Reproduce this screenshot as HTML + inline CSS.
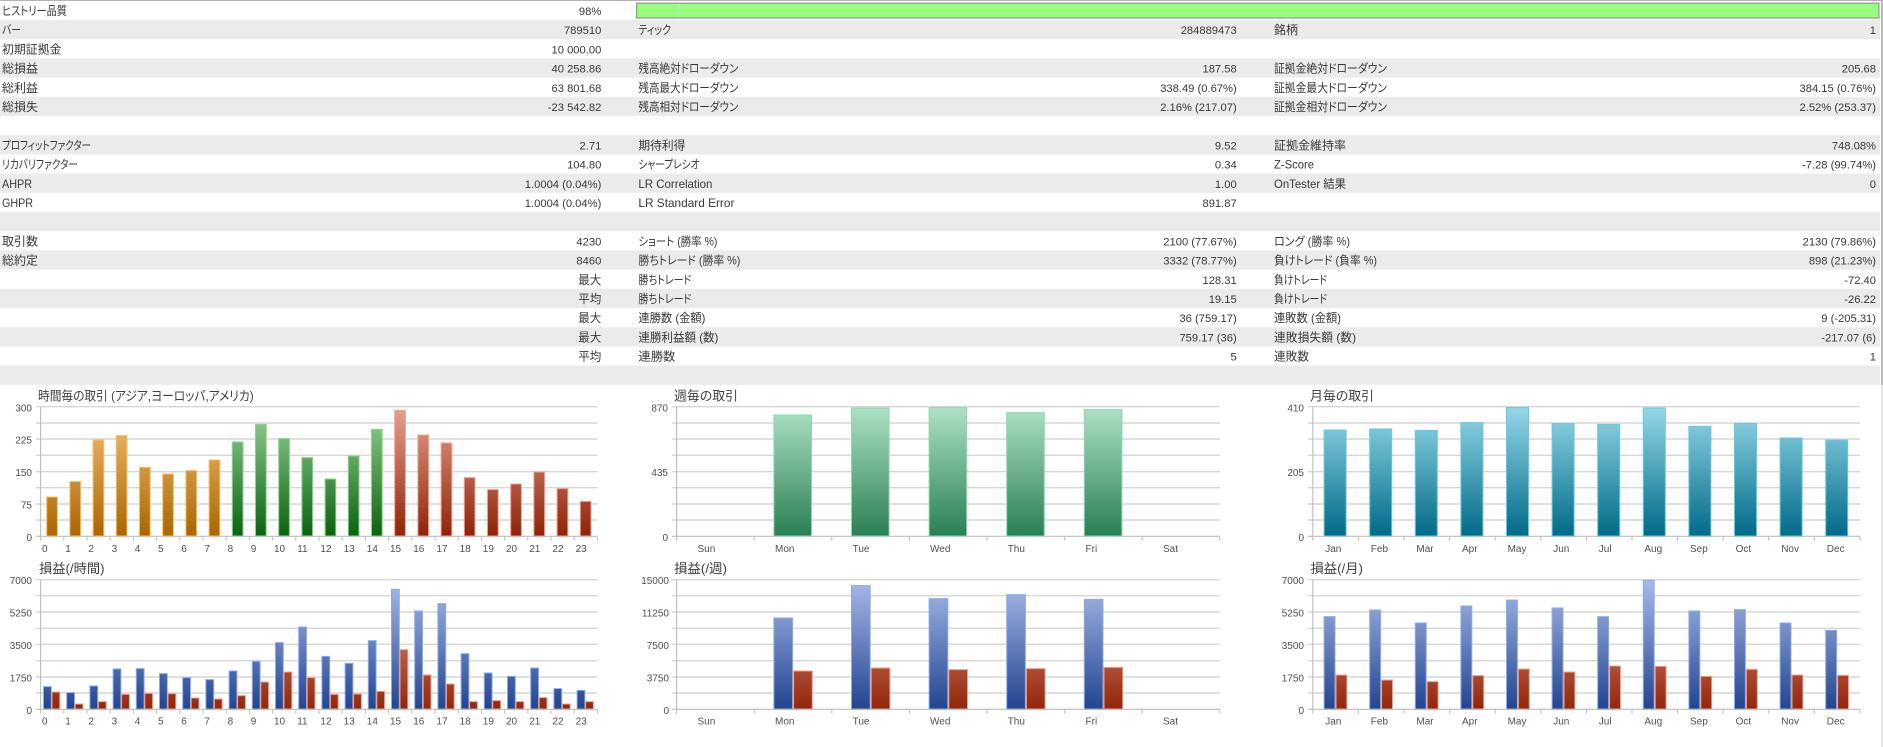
<!DOCTYPE html>
<html lang="ja">
<head>
<meta charset="utf-8">
<title>Report</title>
<style>
html,body{margin:0;padding:0;background:#fff;width:1883px;height:747px;overflow:hidden}
svg{display:block;filter:blur(.38px)}
text{font-family:"Liberation Sans","Noto Sans CJK JP",sans-serif;fill:#383838;font-size:11.2px;font-feature-settings:"palt"}
text[textLength]{font-size:12px}
text:not(.a):not(.t){transform:translateY(.6px)}
.r{text-anchor:end}
.a{font-size:10px;fill:#505050}
.t[textLength]{font-size:13px;fill:#404040}
.b path{vector-effect:non-scaling-stroke;stroke-width:1}
.g{fill:none;stroke:#d6d6d6;stroke-width:1.4}
.x{fill:none;stroke:#bdbdbd;stroke-width:1.1}
</style>
</head>
<body>
<svg width="1883" height="747" viewBox="0 0 1883 747" xmlns="http://www.w3.org/2000/svg">
<defs>
<linearGradient id="o" gradientUnits="userSpaceOnUse" x1="0" x2="0" y1="20" y2="409"><stop offset="0" stop-color="#f6c47c"/><stop offset="1" stop-color="#a86600"/></linearGradient>
<linearGradient id="gr" gradientUnits="userSpaceOnUse" x1="0" x2="0" y1="20" y2="409"><stop offset="0" stop-color="#98d498"/><stop offset="1" stop-color="#0a620e"/></linearGradient>
<linearGradient id="rd" gradientUnits="userSpaceOnUse" x1="0" x2="0" y1="20" y2="409"><stop offset="0" stop-color="#e8a390"/><stop offset="1" stop-color="#8e2208"/></linearGradient>
<linearGradient id="sg" gradientUnits="userSpaceOnUse" x1="0" x2="0" y1="20" y2="409"><stop offset="0" stop-color="#aee2c6"/><stop offset="1" stop-color="#2a7f53"/></linearGradient>
<linearGradient id="tl" gradientUnits="userSpaceOnUse" x1="0" x2="0" y1="20" y2="409"><stop offset="0" stop-color="#96d8e8"/><stop offset="1" stop-color="#006a88"/></linearGradient>
<linearGradient id="bl" gradientUnits="userSpaceOnUse" x1="0" x2="0" y1="539" y2="928"><stop offset="0" stop-color="#a8bbe8"/><stop offset="1" stop-color="#224590"/></linearGradient>
<linearGradient id="r2" gradientUnits="userSpaceOnUse" x1="0" x2="0" y1="539" y2="928"><stop offset="0" stop-color="#e8a390"/><stop offset="1" stop-color="#92260a"/></linearGradient>
</defs>

<!-- top line + scrollbar -->
<rect x="0" y="0" width="1883" height="1" fill="#b4b4b4"/>
<rect x="1881" y="0" width="2" height="385" fill="#b8b8b8"/>
<rect x="1881" y="385" width="2" height="362" fill="#e8e8e8"/>

<!-- rows -->
<g fill="#ebebeb">
<rect x="0" y="20" width="1880" height="19.2"/>
<rect x="0" y="58.4" width="1880" height="19.2"/>
<rect x="0" y="96.8" width="1880" height="19.2"/>
<rect x="0" y="135.2" width="1880" height="19.2"/>
<rect x="0" y="173.6" width="1880" height="19.2"/>
<rect x="0" y="212" width="1880" height="19.2"/>
<rect x="0" y="250.4" width="1880" height="19.2"/>
<rect x="0" y="288.8" width="1880" height="19.2"/>
<rect x="0" y="327.2" width="1880" height="19.2"/>
<rect x="0" y="365.6" width="1880" height="19.2"/>
</g>

<!-- progress bar -->
<rect x="636.6" y="3.2" width="1242.3" height="14.8" fill="#96ff7e" stroke="#9a9a9a" stroke-width="1.3"/>
<rect x="678.4" y="3.8" width="1" height="13.6" fill="#c4e8b8"/>

<!-- col 1 -->
<text x="2" y="14.4" textLength="65" lengthAdjust="spacingAndGlyphs">ヒストリー品質</text>
<text x="2" y="33.6" textLength="19" lengthAdjust="spacingAndGlyphs">バー</text>
<text x="2" y="52.8" textLength="59.5" lengthAdjust="spacingAndGlyphs">初期証拠金</text>
<text x="2" y="72" textLength="36" lengthAdjust="spacingAndGlyphs">総損益</text>
<text x="2" y="91.2" textLength="36" lengthAdjust="spacingAndGlyphs">総利益</text>
<text x="2" y="110.4" textLength="36" lengthAdjust="spacingAndGlyphs">総損失</text>
<text x="2" y="148.8" textLength="89" lengthAdjust="spacingAndGlyphs">プロフィットファクター</text>
<text x="2" y="168" textLength="76" lengthAdjust="spacingAndGlyphs">リカバリファクター</text>
<text x="2" y="187.2" textLength="30" lengthAdjust="spacingAndGlyphs">AHPR</text>
<text x="2" y="206.4" textLength="31" lengthAdjust="spacingAndGlyphs">GHPR</text>
<text x="2" y="244.8" textLength="36" lengthAdjust="spacingAndGlyphs">取引数</text>
<text x="2" y="264" textLength="36" lengthAdjust="spacingAndGlyphs">総約定</text>

<g class="r">
<text class="r" x="601.3" y="14.4">98%</text>
<text class="r" x="601.3" y="33.6">789510</text>
<text class="r" x="601.3" y="52.8">10 000.00</text>
<text class="r" x="601.3" y="72">40 258.86</text>
<text class="r" x="601.3" y="91.2">63 801.68</text>
<text class="r" x="601.3" y="110.4">-23 542.82</text>
<text class="r" x="601.3" y="148.8">2.71</text>
<text class="r" x="601.3" y="168">104.80</text>
<text class="r" x="601.3" y="187.2">1.0004 (0.04%)</text>
<text class="r" x="601.3" y="206.4">1.0004 (0.04%)</text>
<text class="r" x="601.3" y="244.8">4230</text>
<text class="r" x="601.3" y="264">8460</text>
<text class="r" x="601.3" y="283.2" textLength="23" lengthAdjust="spacingAndGlyphs">最大</text>
<text class="r" x="601.3" y="302.4" textLength="23" lengthAdjust="spacingAndGlyphs">平均</text>
<text class="r" x="601.3" y="321.6" textLength="23" lengthAdjust="spacingAndGlyphs">最大</text>
<text class="r" x="601.3" y="340.8" textLength="23" lengthAdjust="spacingAndGlyphs">最大</text>
<text class="r" x="601.3" y="360" textLength="23" lengthAdjust="spacingAndGlyphs">平均</text>
</g>

<!-- col 2 -->
<text x="638.4" y="33.6" textLength="32.6" lengthAdjust="spacingAndGlyphs">ティック</text>
<text x="638.4" y="72" textLength="100" lengthAdjust="spacingAndGlyphs">残高絶対ドローダウン</text>
<text x="638.4" y="91.2" textLength="100" lengthAdjust="spacingAndGlyphs">残高最大ドローダウン</text>
<text x="638.4" y="110.4" textLength="100" lengthAdjust="spacingAndGlyphs">残高相対ドローダウン</text>
<text x="638.4" y="148.8" textLength="47" lengthAdjust="spacingAndGlyphs">期待利得</text>
<text x="638.4" y="168" textLength="61" lengthAdjust="spacingAndGlyphs">シャープレシオ</text>
<text x="638.4" y="187.2" textLength="74" lengthAdjust="spacingAndGlyphs">LR Correlation</text>
<text x="638.4" y="206.4" textLength="96" lengthAdjust="spacingAndGlyphs">LR Standard Error</text>
<text x="638.4" y="244.8" textLength="79" lengthAdjust="spacingAndGlyphs">ショート (勝率 %)</text>
<text x="638.4" y="264" textLength="102" lengthAdjust="spacingAndGlyphs">勝ちトレード (勝率 %)</text>
<text x="638.4" y="283.2" textLength="53" lengthAdjust="spacingAndGlyphs">勝ちトレード</text>
<text x="638.4" y="302.4" textLength="53" lengthAdjust="spacingAndGlyphs">勝ちトレード</text>
<text x="638.4" y="321.6" textLength="67" lengthAdjust="spacingAndGlyphs">連勝数 (金額)</text>
<text x="638.4" y="340.8" textLength="80" lengthAdjust="spacingAndGlyphs">連勝利益額 (数)</text>
<text x="638.4" y="360" textLength="37" lengthAdjust="spacingAndGlyphs">連勝数</text>

<text class="r" x="1236.7" y="33.6">284889473</text>
<text class="r" x="1236.7" y="72">187.58</text>
<text class="r" x="1236.7" y="91.2">338.49 (0.67%)</text>
<text class="r" x="1236.7" y="110.4">2.16% (217.07)</text>
<text class="r" x="1236.7" y="148.8">9.52</text>
<text class="r" x="1236.7" y="168">0.34</text>
<text class="r" x="1236.7" y="187.2">1.00</text>
<text class="r" x="1236.7" y="206.4">891.87</text>
<text class="r" x="1236.7" y="244.8">2100 (77.67%)</text>
<text class="r" x="1236.7" y="264">3332 (78.77%)</text>
<text class="r" x="1236.7" y="283.2">128.31</text>
<text class="r" x="1236.7" y="302.4">19.15</text>
<text class="r" x="1236.7" y="321.6">36 (759.17)</text>
<text class="r" x="1236.7" y="340.8">759.17 (36)</text>
<text class="r" x="1236.7" y="360">5</text>

<!-- col 3 -->
<text x="1274" y="33.6" textLength="24" lengthAdjust="spacingAndGlyphs">銘柄</text>
<text x="1274" y="72" textLength="113" lengthAdjust="spacingAndGlyphs">証拠金絶対ドローダウン</text>
<text x="1274" y="91.2" textLength="113" lengthAdjust="spacingAndGlyphs">証拠金最大ドローダウン</text>
<text x="1274" y="110.4" textLength="113" lengthAdjust="spacingAndGlyphs">証拠金相対ドローダウン</text>
<text x="1274" y="148.8" textLength="72" lengthAdjust="spacingAndGlyphs">証拠金維持率</text>
<text x="1274" y="168" textLength="40" lengthAdjust="spacingAndGlyphs">Z-Score</text>
<text x="1274" y="187.2" textLength="72" lengthAdjust="spacingAndGlyphs">OnTester 結果</text>
<text x="1274" y="244.8" textLength="76" lengthAdjust="spacingAndGlyphs">ロング (勝率 %)</text>
<text x="1274" y="264" textLength="103" lengthAdjust="spacingAndGlyphs">負けトレード (負率 %)</text>
<text x="1274" y="283.2" textLength="53" lengthAdjust="spacingAndGlyphs">負けトレード</text>
<text x="1274" y="302.4" textLength="53" lengthAdjust="spacingAndGlyphs">負けトレード</text>
<text x="1274" y="321.6" textLength="67" lengthAdjust="spacingAndGlyphs">連敗数 (金額)</text>
<text x="1274" y="340.8" textLength="82" lengthAdjust="spacingAndGlyphs">連敗損失額 (数)</text>
<text x="1274" y="360" textLength="35" lengthAdjust="spacingAndGlyphs">連敗数</text>

<text class="r" x="1876" y="33.6">1</text>
<text class="r" x="1876" y="72">205.68</text>
<text class="r" x="1876" y="91.2">384.15 (0.76%)</text>
<text class="r" x="1876" y="110.4">2.52% (253.37)</text>
<text class="r" x="1876" y="148.8">748.08%</text>
<text class="r" x="1876" y="168">-7.28 (99.74%)</text>
<text class="r" x="1876" y="187.2">0</text>
<text class="r" x="1876" y="244.8">2130 (79.86%)</text>
<text class="r" x="1876" y="264">898 (21.23%)</text>
<text class="r" x="1876" y="283.2">-72.40</text>
<text class="r" x="1876" y="302.4">-26.22</text>
<text class="r" x="1876" y="321.6">9 (-205.31)</text>
<text class="r" x="1876" y="340.8">-217.07 (6)</text>
<text class="r" x="1876" y="360">1</text>

<!-- titles -->
<text class="t" x="38" y="400.5" textLength="215.6" lengthAdjust="spacingAndGlyphs">時間毎の取引 (アジア,ヨーロッパ,アメリカ)</text>
<text class="t" x="674" y="400.5" textLength="64" lengthAdjust="spacingAndGlyphs">週毎の取引</text>
<text class="t" x="1310" y="400.5" textLength="64" lengthAdjust="spacingAndGlyphs">月毎の取引</text>
<text class="t" x="39" y="573" textLength="65.5" lengthAdjust="spacingAndGlyphs">損益(/時間)</text>
<text class="t" x="674" y="573" textLength="53" lengthAdjust="spacingAndGlyphs">損益(/週)</text>
<text class="t" x="1310.5" y="573" textLength="52.5" lengthAdjust="spacingAndGlyphs">損益(/月)</text>

<!-- grid -->
<path class="g" d="M36 406.7H597.4M36 423H597.4M36 439H597.4M36 455.3H597.4M36 471.7H597.4M36 487.7H597.4M36 504H597.4M36 520H597.4M36 579.7H597.4M36 595.7H597.4M36 612H597.4M36 628.3H597.4M36 644.3H597.4M36 660.7H597.4M36 677H597.4M36 693H597.4"/>
<path class="g" d="M672 406.7H1219.8M672 423H1219.8M672 439H1219.8M672 455.3H1219.8M672 471.7H1219.8M672 487.7H1219.8M672 504H1219.8M672 520H1219.8M672 579.7H1219.8M672 595.7H1219.8M672 612H1219.8M672 628.3H1219.8M672 644.3H1219.8M672 660.7H1219.8M672 677H1219.8M672 693H1219.8"/>
<path class="g" d="M1308 406.7H1860M1308 423H1860M1308 439H1860M1308 455.3H1860M1308 471.7H1860M1308 487.7H1860M1308 504H1860M1308 520H1860M1308 579.7H1860M1308 595.7H1860M1308 612H1860M1308 628.3H1860M1308 644.3H1860M1308 660.7H1860M1308 677H1860M1308 693H1860"/>
<path class="x" d="M40.6 406.7V536.3M40.6 579.7V709.3M676.6 406.7V536.3M676.6 579.7V709.3M1312.8 406.7V536.3M1312.8 579.7V709.3"/>

<!-- axis base lines -->
<path class="x" d="M36 536.3H597.4M36 709.3H597.4M672 536.3H1219.8M672 709.3H1219.8M1308 536.3H1860M1308 709.3H1860"/>
<!-- x ticks -->
<g fill="none" stroke="#bdbdbd" stroke-width="4">
<path d="M40.1 538.6H598" stroke-dasharray="1 22.2"/>
<path d="M40.1 711.6H598" stroke-dasharray="1 22.2"/>
<path d="M676.1 538.6H1220.3" stroke-dasharray="1 76.6"/>
<path d="M676.1 711.6H1220.3" stroke-dasharray="1 76.6"/>
<path d="M1312.3 538.6H1860.5" stroke-dasharray="1 44.6"/>
<path d="M1312.3 711.6H1860.5" stroke-dasharray="1 44.6"/>
</g>

<!-- bars (y in 3x units) -->
<g class="b" transform="translate(0,400) scale(1,.33333)">
<g fill="url(#o)" stroke="#f8bd62">
<path d="M46.7 408V291h10.7V408z"/><path d="M69.9 408V245h10.7V408z"/><path d="M93.1 408V120h10.7V408z"/><path d="M116.3 408V107h10.7V408z"/><path d="M139.5 408V202h10.7V408z"/><path d="M162.7 408V222h10.7V408z"/><path d="M185.9 408V212h10.7V408z"/><path d="M209.1 408V180h10.7V408z"/>
</g>
<g fill="url(#gr)" stroke="#8fd28f">
<path d="M232.3 408V126h10.7V408z"/><path d="M255.5 408V73h10.7V408z"/><path d="M278.7 408V116h10.7V408z"/><path d="M301.9 408V173h10.7V408z"/><path d="M325.1 408V237h10.7V408z"/><path d="M348.3 408V168h10.7V408z"/><path d="M371.5 408V88h10.7V408z"/>
</g>
<g fill="url(#rd)" stroke="#f0a08c">
<path d="M394.7 408V31h10.7V408z"/><path d="M417.9 408V105h10.7V408z"/><path d="M441.1 408V129h10.7V408z"/><path d="M464.3 408V233h10.7V408z"/><path d="M487.5 408V269h10.7V408z"/><path d="M510.7 408V252h10.7V408z"/><path d="M533.9 408V216h10.7V408z"/><path d="M557.1 408V266h10.7V408z"/><path d="M580.3 408V304h10.7V408z"/>
</g>

<g fill="url(#bl)" stroke="#8ea9e8">
<path d="M43.5 927V860h7.8V927z"/><path d="M66.7 927V878h7.8V927z"/><path d="M89.9 927V858h7.8V927z"/><path d="M113.1 927V807h7.8V927z"/><path d="M136.3 927V806h7.8V927z"/><path d="M159.5 927V821h7.8V927z"/><path d="M182.7 927V833h7.8V927z"/><path d="M205.9 927V839h7.8V927z"/><path d="M229.1 927V813h7.8V927z"/><path d="M252.3 927V784h7.8V927z"/><path d="M275.5 927V728h7.8V927z"/><path d="M298.7 927V681h7.8V927z"/><path d="M321.9 927V769h7.8V927z"/><path d="M345.1 927V790h7.8V927z"/><path d="M368.3 927V722h7.8V927z"/><path d="M391.5 927V568h7.8V927z"/><path d="M414.7 927V633h7.8V927z"/><path d="M437.9 927V611h7.8V927z"/><path d="M461.1 927V761h7.8V927z"/><path d="M484.3 927V819h7.8V927z"/><path d="M507.5 927V829h7.8V927z"/><path d="M530.7 927V804h7.8V927z"/><path d="M553.9 927V866h7.8V927z"/><path d="M577.1 927V871h7.8V927z"/>
</g>
<g fill="url(#r2)" stroke="#f0a08c">
<path d="M52 927V876h7.8V927z"/><path d="M75.2 927V912h7.8V927z"/><path d="M98.4 927V905h7.8V927z"/><path d="M121.6 927V883h7.8V927z"/><path d="M144.8 927V880h7.8V927z"/><path d="M168 927V881h7.8V927z"/><path d="M191.2 927V894h7.8V927z"/><path d="M214.4 927V897h7.8V927z"/><path d="M237.6 927V887h7.8V927z"/><path d="M260.8 927V846h7.8V927z"/><path d="M284 927V816h7.8V927z"/><path d="M307.2 927V833h7.8V927z"/><path d="M330.4 927V883h7.8V927z"/><path d="M353.6 927V882h7.8V927z"/><path d="M376.8 927V874h7.8V927z"/><path d="M400 927V749h7.8V927z"/><path d="M423.2 927V825h7.8V927z"/><path d="M446.4 927V852h7.8V927z"/><path d="M469.6 927V905h7.8V927z"/><path d="M492.8 927V902h7.8V927z"/><path d="M516 927V905h7.8V927z"/><path d="M539.2 927V893h7.8V927z"/><path d="M562.4 927V912h7.8V927z"/><path d="M585.6 927V905h7.8V927z"/>
</g>

<g fill="url(#sg)" stroke="#8dd8b0">
<path d="M773.9 408V45h37.6V408z"/><path d="M851.5 408V24h37.6V408z"/><path d="M929.1 408V23h37.6V408z"/><path d="M1006.7 408V38h37.6V408z"/><path d="M1084.3 408V29h37.6V408z"/>
</g>
<g fill="url(#bl)" stroke="#8ea9e8">
<path d="M773.9 927V654h18.7V927z"/><path d="M851.5 927V557h18.7V927z"/><path d="M929.1 927V596h18.7V927z"/><path d="M1006.7 927V584h18.7V927z"/><path d="M1084.3 927V598h18.7V927z"/>
</g>
<g fill="url(#r2)" stroke="#f0a08c">
<path d="M793.6 927V813h18.7V927z"/><path d="M871.2 927V804h18.7V927z"/><path d="M948.8 927V809h18.7V927z"/><path d="M1026.4 927V806h18.7V927z"/><path d="M1104 927V802h18.7V927z"/>
</g>

<g fill="url(#tl)" stroke="#68c8de">
<path d="M1324.1 408V90h22V408z"/><path d="M1369.7 408V87h22V408z"/><path d="M1415.3 408V91h22V408z"/><path d="M1460.9 408V68h22V408z"/><path d="M1506.5 408V23h22V408z"/><path d="M1552.1 408V71h22V408z"/><path d="M1597.7 408V73h22V408z"/><path d="M1643.3 408V24h22V408z"/><path d="M1688.9 408V79h22V408z"/><path d="M1734.5 408V70h22V408z"/><path d="M1780.1 408V114h22V408z"/><path d="M1825.7 408V120h22V408z"/>
</g>
<g fill="url(#bl)" stroke="#8ea9e8">
<path d="M1324.1 927V650h10.9V927z"/><path d="M1369.7 927V630h10.9V927z"/><path d="M1415.3 927V669h10.9V927z"/><path d="M1460.9 927V618h10.9V927z"/><path d="M1506.5 927V600h10.9V927z"/><path d="M1552.1 927V624h10.9V927z"/><path d="M1597.7 927V650h10.9V927z"/><path d="M1643.3 927V541h10.9V927z"/><path d="M1688.9 927V633h10.9V927z"/><path d="M1734.5 927V629h10.9V927z"/><path d="M1780.1 927V669h10.9V927z"/><path d="M1825.7 927V691h10.9V927z"/>
</g>
<g fill="url(#r2)" stroke="#f0a08c">
<path d="M1336 927V825h10.9V927z"/><path d="M1381.6 927V840h10.9V927z"/><path d="M1427.2 927V845h10.9V927z"/><path d="M1472.8 927V827h10.9V927z"/><path d="M1518.4 927V807h10.9V927z"/><path d="M1564 927V816h10.9V927z"/><path d="M1609.6 927V798h10.9V927z"/><path d="M1655.2 927V799h10.9V927z"/><path d="M1700.8 927V829h10.9V927z"/><path d="M1746.4 927V808h10.9V927z"/><path d="M1792 927V825h10.9V927z"/><path d="M1837.6 927V826h10.9V927z"/>
</g>
</g>

<!-- y labels -->
<g>
<text class="a r" x="32" y="411.5">300</text><text class="a r" x="32" y="443.5">225</text><text class="a r" x="32" y="476">150</text><text class="a r" x="32" y="508.5">75</text><text class="a r" x="32" y="541">0</text>
<text class="a r" x="32" y="584">7000</text><text class="a r" x="32" y="616.5">5250</text><text class="a r" x="32" y="649">3500</text><text class="a r" x="32" y="681.5">1750</text><text class="a r" x="32" y="714">0</text>
<text class="a r" x="668" y="411.5">870</text><text class="a r" x="668" y="476">435</text><text class="a r" x="668" y="541">0</text>
<text class="a r" x="669" y="584">15000</text><text class="a r" x="669" y="616.5">11250</text><text class="a r" x="669" y="649">7500</text><text class="a r" x="669" y="681.5">3750</text><text class="a r" x="669" y="714">0</text>
<text class="a r" x="1304" y="411.5">410</text><text class="a r" x="1304" y="476">205</text><text class="a r" x="1304" y="541">0</text>
<text class="a r" x="1304" y="584">7000</text><text class="a r" x="1304" y="616.5">5250</text><text class="a r" x="1304" y="649">3500</text><text class="a r" x="1304" y="681.5">1750</text><text class="a r" x="1304" y="714">0</text>
</g>

<!-- hour x labels -->
<text class="a" x="42" y="552">0</text><text class="a" x="65.2" y="552">1</text><text class="a" x="88.4" y="552">2</text><text class="a" x="111.6" y="552">3</text><text class="a" x="134.8" y="552">4</text><text class="a" x="158" y="552">5</text><text class="a" x="181.2" y="552">6</text><text class="a" x="204.4" y="552">7</text><text class="a" x="227.6" y="552">8</text><text class="a" x="250.8" y="552">9</text><text class="a" x="274" y="552">10</text><text class="a" x="297.2" y="552">11</text><text class="a" x="320.4" y="552">12</text><text class="a" x="343.6" y="552">13</text><text class="a" x="366.8" y="552">14</text><text class="a" x="390" y="552">15</text><text class="a" x="413.2" y="552">16</text><text class="a" x="436.4" y="552">17</text><text class="a" x="459.6" y="552">18</text><text class="a" x="482.8" y="552">19</text><text class="a" x="506" y="552">20</text><text class="a" x="529.2" y="552">21</text><text class="a" x="552.4" y="552">22</text><text class="a" x="575.6" y="552">23</text>
<text class="a" x="42" y="724.5">0</text><text class="a" x="65.2" y="724.5">1</text><text class="a" x="88.4" y="724.5">2</text><text class="a" x="111.6" y="724.5">3</text><text class="a" x="134.8" y="724.5">4</text><text class="a" x="158" y="724.5">5</text><text class="a" x="181.2" y="724.5">6</text><text class="a" x="204.4" y="724.5">7</text><text class="a" x="227.6" y="724.5">8</text><text class="a" x="250.8" y="724.5">9</text><text class="a" x="274" y="724.5">10</text><text class="a" x="297.2" y="724.5">11</text><text class="a" x="320.4" y="724.5">12</text><text class="a" x="343.6" y="724.5">13</text><text class="a" x="366.8" y="724.5">14</text><text class="a" x="390" y="724.5">15</text><text class="a" x="413.2" y="724.5">16</text><text class="a" x="436.4" y="724.5">17</text><text class="a" x="459.6" y="724.5">18</text><text class="a" x="482.8" y="724.5">19</text><text class="a" x="506" y="724.5">20</text><text class="a" x="529.2" y="724.5">21</text><text class="a" x="552.4" y="724.5">22</text><text class="a" x="575.6" y="724.5">23</text>

<!-- week x labels -->
<text class="a" x="697.5" y="552">Sun</text><text class="a" x="775" y="552">Mon</text><text class="a" x="852.6" y="552">Tue</text><text class="a" x="930" y="552">Wed</text><text class="a" x="1007.7" y="552">Thu</text><text class="a" x="1085.5" y="552">Fri</text><text class="a" x="1163" y="552">Sat</text>
<text class="a" x="697.5" y="724.5">Sun</text><text class="a" x="775" y="724.5">Mon</text><text class="a" x="852.6" y="724.5">Tue</text><text class="a" x="930" y="724.5">Wed</text><text class="a" x="1007.7" y="724.5">Thu</text><text class="a" x="1085.5" y="724.5">Fri</text><text class="a" x="1163" y="724.5">Sat</text>

<!-- month x labels -->
<text class="a" x="1325.2" y="552">Jan</text><text class="a" x="1370.8" y="552">Feb</text><text class="a" x="1416.4" y="552">Mar</text><text class="a" x="1462" y="552">Apr</text><text class="a" x="1507.6" y="552">May</text><text class="a" x="1553.2" y="552">Jun</text><text class="a" x="1598.8" y="552">Jul</text><text class="a" x="1644.4" y="552">Aug</text><text class="a" x="1690" y="552">Sep</text><text class="a" x="1735.6" y="552">Oct</text><text class="a" x="1781.2" y="552">Nov</text><text class="a" x="1826.8" y="552">Dec</text>
<text class="a" x="1325.2" y="724.5">Jan</text><text class="a" x="1370.8" y="724.5">Feb</text><text class="a" x="1416.4" y="724.5">Mar</text><text class="a" x="1462" y="724.5">Apr</text><text class="a" x="1507.6" y="724.5">May</text><text class="a" x="1553.2" y="724.5">Jun</text><text class="a" x="1598.8" y="724.5">Jul</text><text class="a" x="1644.4" y="724.5">Aug</text><text class="a" x="1690" y="724.5">Sep</text><text class="a" x="1735.6" y="724.5">Oct</text><text class="a" x="1781.2" y="724.5">Nov</text><text class="a" x="1826.8" y="724.5">Dec</text>
</svg>
</body>
</html>
